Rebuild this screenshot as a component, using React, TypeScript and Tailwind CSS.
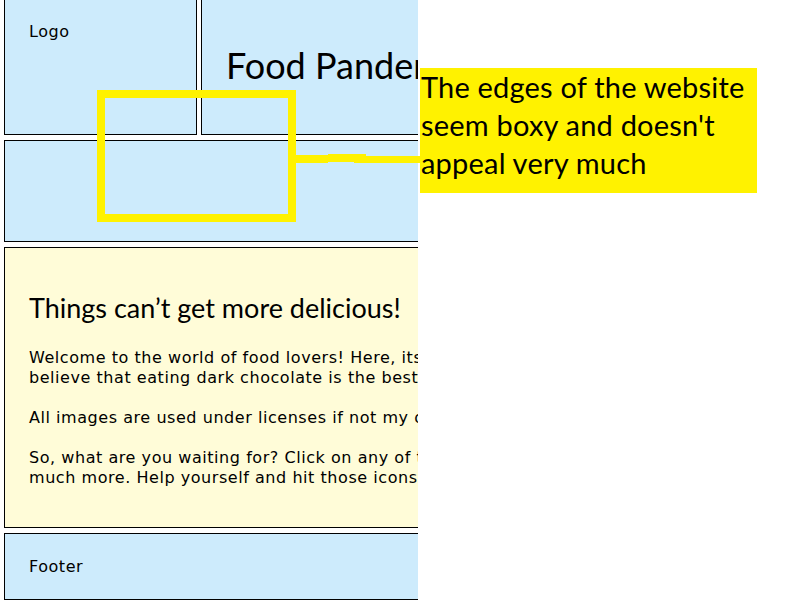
import React from 'react';

const siteFont = { fontFamily: '"DejaVu Sans", "Noto Sans", sans-serif' };
const headFont = { fontFamily: 'Lato, "Noto Sans", sans-serif' };

const App: React.FC = () => {
  return (
    <div className="relative w-[789px] h-[605px] bg-white overflow-hidden">
      {/* Clipped website */}
      <div className="w-[418px] overflow-hidden text-black" style={siteFont}>
        <div className="w-[900px] pl-1 flex flex-col gap-[5px] text-[16px] tracking-[0.55px] leading-5">
          <div className="flex gap-1 h-[135px]">
            <div className="w-[193px] border border-t-0 border-black bg-[#cdebfc] pl-6 pt-[22px]">
              Logo
            </div>
            <div className="flex-1 border border-t-0 border-black bg-[#cdebfc] pl-6 pt-[45px]">
              <h1 className="text-[36px] leading-10 tracking-normal font-normal" style={headFont}>
                Food Pandemic
              </h1>
            </div>
          </div>

          <div className="h-[102px] border border-black bg-[#cdebfc]" />

          <div className="h-[281px] border border-black bg-[#fffcd8] pl-6 pt-[44px] whitespace-nowrap">
            <h2 className="text-[27px] leading-8 tracking-normal mb-[24px]" style={headFont}>
              Things can’t get more delicious!
            </h2>
            <p className="mb-5">
              Welcome to the world of food lovers! Here, its all about food and more food. We
              <br />
              believe that eating dark chocolate is the best way to start your day.
            </p>
            <p className="mb-5">All images are used under licenses if not my own.</p>
            <p>
              So, what are you waiting for? Click on any of the recipes and find out so
              <br />
              much more. Help yourself and hit those icons to share the love.
            </p>
          </div>

          <div className="h-[67px] border border-black bg-[#cdebfc] pl-6 flex items-center">
            Footer
          </div>
        </div>
      </div>

      {/* Annotation: outline, connector and note */}
      <div className="absolute left-[97px] top-[90px] w-[199px] h-[132px] border-[8px] border-[#fff200]" />
      <svg className="absolute left-[294px] top-[150px]" width="128" height="16" viewBox="0 0 128 16">
        <rect x="0" y="5" width="34" height="8" fill="#fff200" />
        <rect x="34" y="4" width="38" height="8" fill="#fff200" />
        <rect x="60" y="6" width="68" height="7" fill="#fff200" />
      </svg>
      <div
        className="absolute left-[420px] top-[68px] w-[337px] h-[125px] bg-[#fff200] pl-px pt-0 text-[29px] leading-[38px] tracking-[0.2px] text-black"
        style={{ fontFamily: 'Lato, "Open Sans", sans-serif' }}
      >
        The edges of the website seem boxy and doesn't appeal very much
      </div>
    </div>
  );
};

export default App;
